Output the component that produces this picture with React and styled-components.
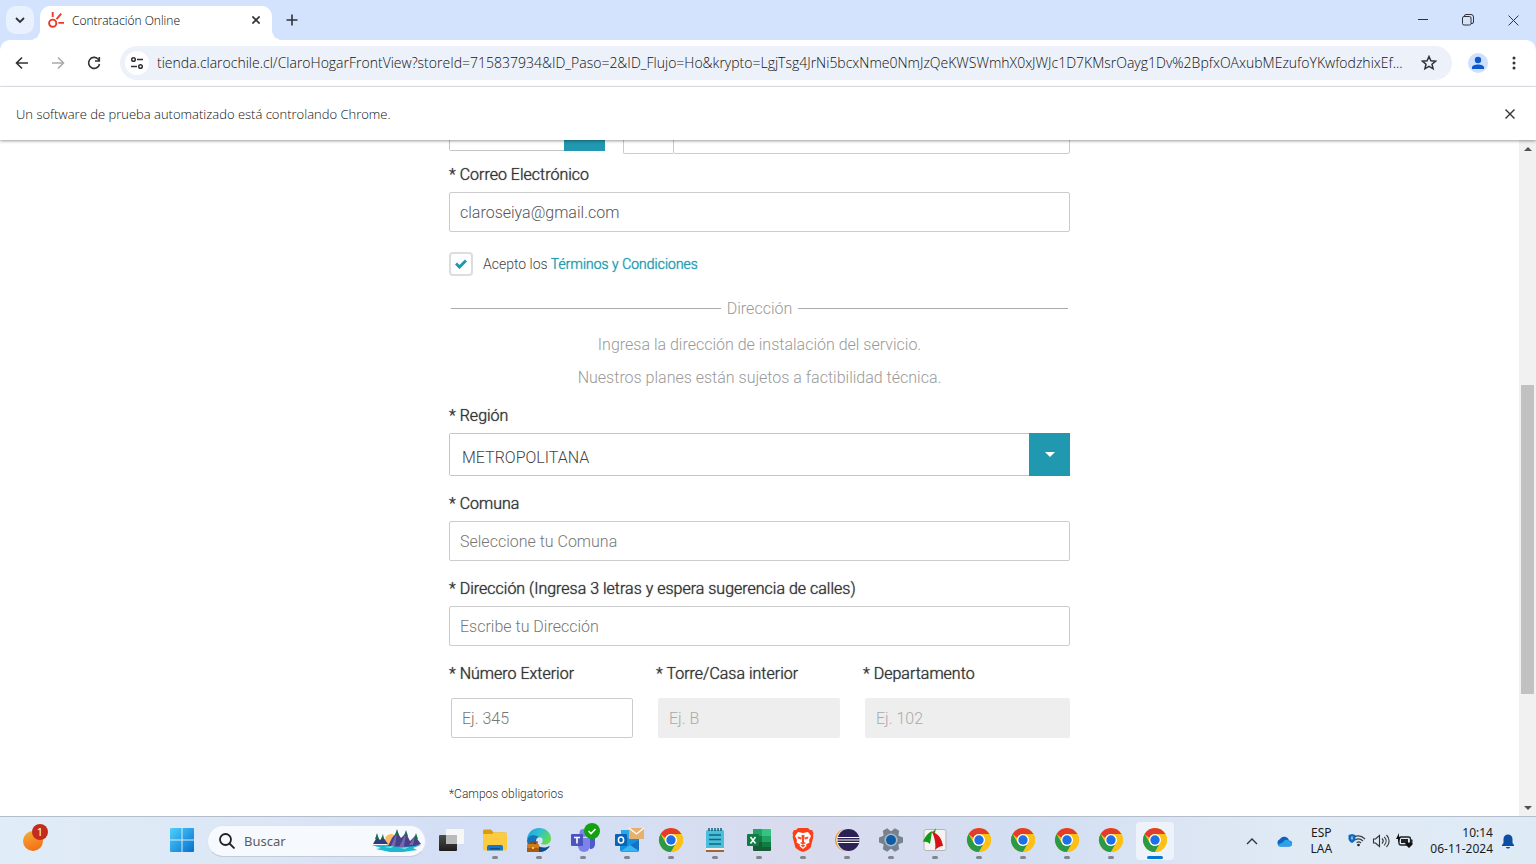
import React from "react";
import styled, { createGlobalStyle } from "styled-components";

const GlobalStyle = createGlobalStyle`
  * { box-sizing: border-box; }
  body { margin: 0; background: #fff; }
  button, input, select { font: inherit; color: inherit; margin: 0; }
  button { border: 0; background: none; padding: 0; cursor: pointer; }
`;

const ui = `"Noto Sans", "Open Sans", sans-serif`;
const chrome = `"Open Sans", "Noto Sans", sans-serif`;
const web = `Roboto, "Liberation Sans", sans-serif`;
const teal = "#2098b0";

const Window = styled.div`
  min-height: 100vh;
  display: flex;
  flex-direction: column;
  font-family: ${ui};
`;

/* ---------- browser frame ---------- */
const TabStrip = styled.header`
  display: flex;
  align-items: flex-end;
  height: 40px;
  background: #d3e3fd;
`;
const TabSearch = styled.button`
  width: 28px;
  height: 28px;
  margin: 0 6px 6px;
  border-radius: 10px;
  background: #e9f1fe;
  display: grid;
  place-items: center;
`;
const Tab = styled.div`
  position: relative;
  display: flex;
  align-items: center;
  gap: 8px;
  width: 232px;
  height: 34px;
  padding: 0 8px 6px;
  border-radius: 10px 10px 0 0;
  background: #fff;
  font-family: ${chrome};
  font-size: 12px;
  font-weight: 300;
  color: #000;
  &::before, &::after {
    content: "";
    position: absolute;
    bottom: 0;
    width: 10px;
    height: 10px;
  }
  &::before {
    left: -10px;
    background: radial-gradient(circle at 0 0, transparent 10px, #fff 10px);
  }
  &::after {
    right: -10px;
    background: radial-gradient(circle at 100% 0, transparent 10px, #fff 10px);
  }
`;
const TabTitle = styled.span`
  flex: 1;
  white-space: nowrap;
`;
const IconButton = styled.button`
  display: grid;
  place-items: center;
  width: ${(p) => p.$w || 36}px;
  height: ${(p) => p.$h || 28}px;
  flex: none;
`;
const WindowControls = styled.div`
  display: flex;
  margin-left: auto;
  align-self: stretch;
`;
const Toolbar = styled.div`
  background: #d3e3fd;
`;
const ToolbarInner = styled.div`
  display: flex;
  align-items: center;
  height: 47px;
  padding: 0 4px;
  background: #fff;
  border-bottom: 1px solid #e6e9ee;
  border-radius: 10px 10px 0 0;
`;
const Omnibox = styled.div`
  flex: 1;
  min-width: 0;
  display: flex;
  align-items: center;
  height: 34px;
  margin: 0 8px;
  padding: 0 5px;
  border-radius: 17px;
  background: #ecf1fa;
`;
const SiteInfo = styled.button`
  width: 24px;
  height: 24px;
  flex: none;
  border-radius: 50%;
  background: #fff;
  display: grid;
  place-items: center;
`;
const Address = styled.input`
  flex: 1;
  min-width: 0;
  margin-left: 8px;
  padding: 0;
  border: 0;
  outline: 0;
  background: none;
  font-family: ${chrome};
  font-size: 14px;
  font-weight: 300;
  line-height: 20px;
  color: #111;
  text-overflow: ellipsis;
`;
const InfoBar = styled.div`
  position: relative;
  z-index: 1;
  display: flex;
  align-items: center;
  justify-content: space-between;
  height: 53px;
  padding: 0 8px 0 16px;
  background: #fff;
  box-shadow: 0 1px 3px rgba(0, 0, 0, 0.4);
  font-family: ${chrome};
  font-size: 13px;
  font-weight: 300;
  color: #111;
`;

/* ---------- page ---------- */
const Viewport = styled.div`
  flex: 1;
  display: flex;
`;
const Main = styled.main`
  flex: 1;
  overflow: hidden;
  font-family: ${web};
  font-size: 16px;
`;
const Form = styled.form`
  max-width: 621px;
  margin: 0 auto;
  padding-bottom: 12px;
`;
const PhoneRow = styled.div`
  display: flex;
  align-items: flex-start;
  gap: 18px;
  margin-top: -31px;
`;
const PhoneBox = styled.div`
  flex: 1;
  display: flex;
  margin-top: 5px;
`;
const Field = styled.div`
  display: flex;
  flex-direction: column;
  gap: 7px;
  margin-top: ${(p) => p.$top || 18}px;
`;
const Label = styled.label`
  line-height: 20px;
  font-weight: 300;
  color: #333;
  text-shadow: 0 0 1px #444;
  white-space: nowrap;
`;
const Input = styled.input`
  width: 100%;
  height: 40px;
  padding: 0 10px;
  border: 1px solid #ccc;
  border-radius: 2px;
  background: #fff;
  font-weight: 300;
  color: #555;
  &::placeholder { color: #777; opacity: 1; }
  &:disabled {
    background: #eee;
    border-color: #eee;
    &::placeholder { color: #aaa; }
  }
`;
const Prefix = styled(Input)`
  width: 50px;
  flex: none;
  border-right: 0;
  border-radius: 2px 0 0 2px;
`;
const SelectBox = styled.div`
  display: grid;
  width: ${(p) => p.$w || "100%"};
  height: ${(p) => p.$h}px;
  border: 1px solid #c4c4c4;
  border-radius: 2px;
  > * { grid-area: 1 / 1; }
`;
const Select = styled.select`
  appearance: none;
  width: 100%;
  padding: 5px 50px 0 12px;
  border: 0;
  background: #fff;
  font-weight: 300;
  color: #444;
`;
const Caret = styled.span`
  justify-self: end;
  width: 41px;
  margin: -1px;
  background: ${teal};
  display: grid;
  place-items: center;
  pointer-events: none;
`;
const Terms = styled.div`
  display: flex;
  align-items: center;
  gap: 10px;
  margin-top: 20px;
  font-size: 14px;
  line-height: 20px;
  font-weight: 300;
  color: #444;
`;
const CheckWrap = styled.span`
  display: grid;
  place-items: center;
  > * { grid-area: 1 / 1; }
  svg { pointer-events: none; }
`;
const Check = styled.input`
  appearance: none;
  width: 24px;
  height: 24px;
  border: 2px solid #ddd;
  border-radius: 4px;
  background: #fff;
`;
const TermsLink = styled.a`
  color: ${teal};
  text-shadow: 0 0 1px ${teal};
  text-decoration: none;
`;
const Divider = styled.h2`
  display: flex;
  align-items: center;
  gap: 6px;
  margin: 22px 2px 9px;
  font-size: 16px;
  line-height: 21px;
  font-weight: 300;
  color: #999;
  &::before, &::after {
    content: "";
    flex: 1;
    border-top: 1px solid #aaa;
  }
`;
const Intro = styled.p`
  margin: 0;
  line-height: 33px;
  font-weight: 300;
  text-align: center;
  color: #999;
`;
const Columns = styled.div`
  display: grid;
  grid-template-columns: repeat(3, minmax(0, 1fr));
  margin-top: 18px;
`;
const Column = styled.div`
  display: flex;
  flex-direction: column;
  gap: 14px;
`;
const ColumnInput = styled.div`
  padding: 0 ${(p) => (p.$last ? 0 : 23)}px 0 2px;
`;
const Note = styled.p`
  margin: 46px 0 0;
  font-size: 12px;
  line-height: 20px;
  font-weight: 300;
  color: #333;
`;
const ScrollBar = styled.div`
  width: 17px;
  display: flex;
  flex-direction: column;
  align-items: center;
  background: #f1f1f1;
`;
const ScrollArrow = styled.span`
  display: grid;
  place-items: center;
  height: 17px;
`;
const Track = styled.div`
  flex: 1;
  width: 13px;
  display: grid;
  grid-template-rows: 228fr 309fr 105fr;
`;
const Thumb = styled.div`
  grid-row: 2;
  background: #c1c1c1;
`;

/* ---------- taskbar ---------- */
const TaskBar = styled.footer`
  display: flex;
  align-items: stretch;
  height: 48px;
  border-top: 1px solid #b5bdca;
  background: linear-gradient(90deg, #e0ecf6 0%, #dde8f6 14%, #d4def5 28%, #d5dff4 40%, #d9dbee 52%, #d3dff3 68%, #dae4f3 76%, #e0eaf5 84%, #deebf5 100%);
  color: #1b1b1b;
`;
const Widgets = styled.button`
  width: 44px;
  margin: 0 105px 0 11px;
  display: grid;
  place-items: center;
`;
const Badge = styled.span`
  grid-area: 1 / 1;
  width: 16px;
  height: 16px;
  margin: -18px 0 0 14px;
  border-radius: 50%;
  background: #c42b1c;
  color: #fff;
  font-size: 11px;
  line-height: 16px;
  text-align: center;
`;
const WidgetDot = styled.span`
  grid-area: 1 / 1;
  width: 20px;
  height: 20px;
  border-radius: 50%;
  background: linear-gradient(160deg, #efb23a, #f58220 60%, #f06a10);
`;
const SearchBox = styled.label`
  display: flex;
  align-items: center;
  gap: 9px;
  width: 219px;
  height: 32px;
  align-self: center;
  margin: 0 3px 0 3px;
  padding: 0 4px 0 11px;
  border-radius: 16px;
  border: 1px solid #dde3ee;
  border-bottom-color: #c3cad8;
  background: #f6f9fe;
`;
const SearchInput = styled.input`
  flex: 1;
  min-width: 0;
  padding: 0;
  border: 0;
  outline: 0;
  background: none;
  font-size: 13px;
  &::placeholder { color: #5c5c5c; opacity: 1; }
`;
const TaskButton = styled.button`
  position: relative;
  width: 44px;
  flex: none;
  display: grid;
  place-items: center;
  border-radius: 4px;
  &::before {
    content: "";
    grid-area: 1 / 1;
    width: 38px;
    height: 38px;
    border-radius: 4px;
    background: ${(p) => (p.$active ? "#eef2fb" : "transparent")};
  }
  &::after {
    content: "";
    position: absolute;
    bottom: 5px;
    left: ${(p) => (p.$active ? 14 : 19)}px;
    right: ${(p) => (p.$active ? 14 : 19)}px;
    height: 3px;
    border-radius: 2px;
    background: ${(p) => (p.$active ? "#0078d4" : p.$open ? "#81858f" : "transparent")};
  }
  > svg { grid-area: 1 / 1; overflow: visible; margin-bottom: 2px; }
`;
const Tray = styled.div`
  display: flex;
  align-items: center;
  margin-left: auto;
  padding-right: 22px;
  font-size: 12px;
  line-height: 16px;
`;
const Lang = styled.button`
  width: 42px;
  line-height: 16px;
  text-align: center;
`;
const Status = styled.button`
  display: flex;
  align-items: center;
  gap: 6px;
  margin: 0 16px 0 6px;
`;
const Clock = styled.button`
  margin-right: 9px;
  text-align: right;
  line-height: 16px;
`;

/* ---------- drawings ---------- */
const Stroke = ({ s = 16, w = 1.6, c = "#303236", children, box = 16 }) => (
  <svg width={s} height={s} viewBox={`0 0 ${box} ${box}`} fill="none" stroke={c} strokeWidth={w} aria-hidden="true">
    {children}
  </svg>
);
const Cross = ({ s = 10, w = 1.4 }) => (
  <Stroke s={s} w={w} box={10}><path d="M.5 .5l9 9M9.500 .5l-9 9" /></Stroke>
);
const Triangle = ({ up, w = 8, h = 4, c = "#505050" }) => (
  <svg width={w} height={h} viewBox="0 0 8 4" fill={c} aria-hidden="true"><path d={up ? "M0 4L4 0l4 4z" : "M0 0h8L4 4z"} /></svg>
);
const Pic = ({ children, w = 24, h = 24 }) => (
  <svg width={w} height={h} viewBox={`0 0 ${w} ${h}`} aria-hidden="true">{children}</svg>
);

const ClaroLogo = () => (
  <svg width="16" height="16" viewBox="0 0 16 16" fill="none" stroke="#ef3829" strokeWidth="1.9" aria-hidden="true">
    <circle cx="4.700" cy="11.200" r="3.600" /><path d="M4.700 0v5M8.600 7.200l4.600-5.500M10.400 10.900H16" />
  </svg>
);
const ChromeLogo = () => (
  <Pic>
    <circle cx="12" cy="12" r="12" fill="#fbc116" />
    <path d="M1.600 6A12 12 0 0 1 22.400 6H12a6 6 0 0 0-5.600 4z" fill="#e33b2e" />
    <path d="M1.600 6A12 12 0 0 0 12 24l5.200-9L12 18a6 6 0 0 1-5.200-3z" fill="#2a9a48" />
    <path d="M12 6h10.400A12 12 0 0 1 12 24l5.200-9A6 6 0 0 0 12 6z" fill="#fbc116" />
    <circle cx="12" cy="12" r="6" fill="#fff" /><circle cx="12" cy="12" r="4.700" fill="#1f6fe8" />
  </Pic>
);
const WindowsLogo = () => (
  <Pic>
    <defs><linearGradient id="win" x1="0" y1="0" x2="1" y2="1"><stop offset="0" stopColor="#4fd0fb" /><stop offset="1" stopColor="#0470cf" /></linearGradient></defs>
    <path fill="url(#win)" d="M0 1a1 1 0 0 1 1-1h10.500v11.500H0zM12.500 0H23a1 1 0 0 1 1 1v10.500H12.500zM0 12.500h11.500V24H1a1 1 0 0 1-1-1zM12.500 12.500H24V23a1 1 0 0 1-1 1H12.500z" />
  </Pic>
);
const TaskViewLogo = () => (
  <Pic>
    <defs>
      <linearGradient id="tv" x1="0" y1="0" x2="0" y2="1"><stop offset="0" stopColor="#4d4d4d" /><stop offset="1" stopColor="#1d1d1d" /></linearGradient>
    </defs>
    <rect x="0" y="7" width="18" height="16" rx="1" fill="url(#tv)" />
    <rect x="7" y="1" width="18" height="15" rx="1" fill="#f7f7f7" /><path d="M7 7h11v9H7z" fill="#b9babc" />
  </Pic>
);
const FolderLogo = () => (
  <Pic>
    <path d="M0 3a1.500 1.500 0 0 1 1.500-1.500h6.500l2.500 3H22.500A1.500 1.500 0 0 1 24 6v4H0z" fill="#dd9b0f" />
    <path d="M0 6h9l2-1.500H22.500A1.500 1.500 0 0 1 24 6v15a1.500 1.500 0 0 1-1.500 1.500H1.500A1.500 1.500 0 0 1 0 21z" fill="#fccb3f" />
    <path d="M4 22.500V19a2 2 0 0 1 2-2h12a2 2 0 0 1 2 2v3.500z" fill="#1378cf" /><path d="M7 20h10v1.500H7z" fill="#0a4f95" />
  </Pic>
);
const EdgeLogo = () => (
  <Pic>
    <defs>
      <linearGradient id="e1" x1="0" y1="0" x2="1" y2=".5"><stop offset="0" stopColor="#2199df" /><stop offset=".5" stopColor="#2cc0d0" /><stop offset="1" stopColor="#62d957" /></linearGradient>
    </defs>
    <path d="M0 12C0 5 5.500 0 12 0c7 0 12 5 12 10.500 0 4-3 6-6.500 6-3 0-4.500-1-3.500-3 .8-1.500-.5-5-5-5-5 0-9 1.500-9 3.500z" fill="url(#e1)" />
    <path d="M0 12c1-4 4.500-5.500 8.500-4.500 3 .5 5.500 2.500 5.500 5 0-2-4-2-5 0-1.500 4 0 7 4 8 3.500 1 7 0 10-3-2 4-6 6.500-11 6.500C5 24 0 19 0 12z" fill="#1572bd" />
    <path d="M8.500 11.500C8 16 12 20 18 19.500c2 0 4-1.500 4.500-1.500C20 23 15 24.500 11 23.500 6 21 6.500 14 8.500 11.500z" fill="#0d4b91" />
    <circle cx="12.500" cy="12.500" r="3.200" fill="#d6e2f6" />
    <path d="M4 16v-2h6v2" stroke="#8b4b0e" strokeWidth="1.400" fill="none" /><rect x="0" y="16" width="12" height="8" rx="1" fill="#cf7a1b" /><path d="M0 20h12v4H0z" fill="#a85a10" /><path d="M5 19h2v2H5z" fill="#f4c467" />
  </Pic>
);
const TeamsLogo = () => (
  <Pic>
    <circle cx="20" cy="8" r="3" fill="#5059c9" /><circle cx="12.500" cy="5" r="4" fill="#7b83eb" />
    <path d="M16 10h8v6c0 3-2 5-5 5z" fill="#5059c9" /><path d="M7 10h12v8a6 6 0 0 1-12 0z" fill="#7b83eb" />
    <rect x="0" y="6" width="12" height="12" rx="1" fill="#4b53bc" />
    <path d="M3 9.500h6M6 9.500V15.500" stroke="#fff" strokeWidth="1.600" />
    <circle cx="21" cy="3" r="8" fill="#13a10e" /><path d="M17.500 3l2.500 2.500 4.500-4.500" stroke="#fff" strokeWidth="1.600" fill="none" />
  </Pic>
);
const OutlookLogo = () => (
  <Pic>
    <path d="M6 2h12v9H6z" fill="#28a8ea" /><path d="M5 10h19v12a1.500 1.500 0 0 1-1.500 1.500h-16A1.500 1.500 0 0 1 5 22z" fill="#1490df" />
    <path d="M6 23l18-11v10a1.500 1.500 0 0 1-1.500 1.500h-16z" fill="#1a6fc0" /><path d="M6 23l9-6 9 6z" fill="#35b8f1" />
    <rect x="0" y="6" width="12" height="12" rx="1" fill="#0a64b4" /><ellipse cx="6" cy="12" rx="2.600" ry="3" fill="none" stroke="#fff" strokeWidth="1.500" />
    <path d="M14 0h15v11H14z" fill="#e8b06d" /><path d="M14 0l7.500 6L29 0" fill="none" stroke="#fff" strokeWidth="1.300" />
  </Pic>
);
const NotepadLogo = () => (
  <Pic>
    <rect x="3" y="2" width="18" height="20" rx="1.500" fill="#49bfdb" /><path d="M3 20h18v3H3z" fill="#f4efe9" /><path d="M3 22h18v2H3z" fill="#a5623a" />
    <path d="M6 7h12M6 11.500h12M6 16h12" stroke="#11667b" strokeWidth="1.500" /><path d="M6 0v3M9 0v3M12 0v3M15 0v3M18 0v3" stroke="#155f74" strokeWidth="1.500" />
  </Pic>
);
const ExcelLogo = () => (
  <Pic>
    <path d="M6 1h9v7H6z" fill="#21a366" /><path d="M15 1h8a1 1 0 0 1 1 1v6h-9z" fill="#33c481" /><path d="M6 8h9v6H6z" fill="#107c41" /><path d="M15 8h9v6h-9z" fill="#21a366" /><path d="M6 14h18v8a1 1 0 0 1-1 1H7a1 1 0 0 1-1-1z" fill="#185c37" /><path d="M15 14h9v5h-9z" fill="#107c41" />
    <rect y="6" width="12" height="12" rx="1" fill="#107c41" /><path d="M3.500 9l5 6.500M8.500 9l-5 6.500" stroke="#fff" strokeWidth="1.600" />
  </Pic>
);
const BraveLogo = () => (
  <Pic>
    <path d="M7 0h10l2 2h2l1.500 3-.5 2 .3 2-2.500 10c-.5 1.500-2 2-4 3.500L12 24l-3.800-1.500c-2-1.500-3.500-2-4-3.500L1.700 9 2 7l-.5-2L3 2h2z" fill="#fb3f16" />
    <path d="M7 4l5 1 5-1 3 4-2 4 .5 2.500-3.500 2 .5 1.500-3.500 3-3.500-3 .500-1.500-3.500-2L6 12 4 8z" fill="#fff" />
    <path d="M6.500 8.500l4 1-.500 2-3-1zM17.500 8.500l-4 1 .5 2 3-1zM10.500 7h3l-.5 7 2 1-3 1.500-3-1.500 2-1zM9.500 17.500l2.500-1 2.500 1-2.500 1.700z" fill="#fb4a1e" />
  </Pic>
);
const EclipseLogo = () => (
  <Pic>
    <circle cx="11" cy="12" r="11" fill="#f7941e" /><circle cx="12.500" cy="12" r="11.200" fill="#dde1ef" />
    <circle cx="13.500" cy="12" r="11" fill="#2c2255" /><path d="M2.500 9.500h22M1.500 12h23.500M2.500 14.500h22" stroke="#fff" strokeWidth="1.200" />
  </Pic>
);
const GearLogo = () => (
  <Pic>
    <g fill="#76828e">
      <circle cx="12" cy="12" r="9" />
      {[30, 90, 150].map((a) => (
        <path key={a} d="M9.500 0h5l1.500 4v16l-1.500 4h-5L8 20V4z" transform={`rotate(${a} 12 12)`} />
      ))}
    </g>
    <circle cx="12" cy="12" r="6.500" fill="#aebac6" /><circle cx="12" cy="12" r="5" fill="#0e5ca6" />
  </Pic>
);
const CaptureLogo = () => (
  <Pic>
    <rect x="1" y="1.500" width="22" height="21" rx="2" fill="#f3f3f3" stroke="#b5b5b5" />
    <path d="M0 14C2 8 6 4 9 3.500L7 16c-2-2-4-2.500-7-2z" fill="#139a17" /><path d="M6 4c4 0 5-1 7-4l-1 5z" fill="#1ba01b" />
    <path d="M9 4c6 1 10 7 11 14-3 0-6 2-8 4 1-5 0-12-3-18z" fill="#d61212" />
  </Pic>
);
const Landscape = () => (
  <Pic w={49} h={24}>
    <path d="M0 16h49l-8 3 4 2-14 2H18L4 20l5-1z" fill="#1bb8cf" /><circle cx="19" cy="11" r="6" fill="#f9bd68" />
    <path d="M1 15l4-7 3 3 3-3 5 7z" fill="#343b7b" /><path d="M16 17l4-8 5-6 4 6 5-5 4 8 5-5 6 8-6 2-12 1z" fill="#493f8b" /><path d="M25 3l-2 14h-4zM34 4l-2 14h-5zM43 7l-2 9h-4z" fill="#7667aa" />
    <path d="M25 0l2 6h-4zM34 1l2 6h-4zM5 4l2 6H3zM44 4l2 6h-4zM11 5l1 5h-3z" fill="#1f6a4c" />
    <path d="M12 18l10-1-3 2zM28 19l9-1-4 2z" fill="#8be5e8" />
  </Pic>
);

const apps = [
  ["Vista de tareas", TaskViewLogo, false],
  ["Explorador de archivos", FolderLogo, true],
  ["Microsoft Edge", EdgeLogo, true],
  ["Microsoft Teams", TeamsLogo, true],
  ["Outlook", OutlookLogo, true],
  ["Google Chrome", ChromeLogo, true],
  ["Bloc de notas", NotepadLogo, true],
  ["Excel", ExcelLogo, true],
  ["Brave", BraveLogo, true],
  ["Eclipse", EclipseLogo, true],
  ["Configuración", GearLogo, true],
  ["FastStone Capture", CaptureLogo, true],
  ["Chrome 2", ChromeLogo, true],
  ["Chrome 3", ChromeLogo, true],
  ["Chrome 4", ChromeLogo, true],
  ["Chrome 5", ChromeLogo, true],
];

const url =
  "tienda.clarochile.cl/ClaroHogarFrontView?storeId=715837934&ID_Paso=2&ID_Flujo=Ho&krypto=LgjTsg4JrNi5bcxNme0NmJzQeKWSWmhX0xJWJc1D7KMsrOayg1Dv%2BpfxOAxubMEzufoYKwfodzhixEf...";

function BrowserFrame() {
  return (
    <>
      <TabStrip>
        <TabSearch aria-label="Buscar pestañas"><Stroke s={10} w={1.8} box={10}><path d="M1 3l4 4 4-4" /></Stroke></TabSearch>
        <Tab>
          <ClaroLogo />
          <TabTitle>Contratación Online</TabTitle>
          <IconButton $w={16} $h={16} aria-label="Cerrar pestaña"><Cross s={8} w={2} /></IconButton>
        </Tab>
        <IconButton $w={40} $h={40} aria-label="Nueva pestaña"><Stroke s={12} w={1.6} box={12}><path d="M6 0.500v11M0.500 6h11" /></Stroke></IconButton>
        <WindowControls>
          <IconButton $w={45} $h={40} aria-label="Minimizar"><Stroke s={10} w={1} box={10}><path d="M0 4.500h10" /></Stroke></IconButton>
          <IconButton $w={45} $h={40} aria-label="Restaurar"><Stroke s={12} w={1} box={12}><rect x="0.500" y="2.500" width="8.500" height="8.500" rx="1.500" /><path d="M2.500 2.500v-.5A1.500 1.500 0 0 1 4 .5h5A2.500 2.500 0 0 1 11.500 3v5A1.500 1.500 0 0 1 10 9.500H9" /></Stroke></IconButton>
          <IconButton $w={46} $h={40} aria-label="Cerrar"><Cross s={11} w={0.9} /></IconButton>
        </WindowControls>
      </TabStrip>
      <Toolbar>
        <ToolbarInner>
          <IconButton aria-label="Atrás"><Stroke><path d="M14 8H3M8 2.500L2.500 8 8 13.500" /></Stroke></IconButton>
          <IconButton aria-label="Adelante"><Stroke c="#a9abae"><path d="M2 8h11M8 2.500L13.500 8 8 13.500" /></Stroke></IconButton>
          <IconButton aria-label="Recargar"><Stroke><path d="M13.500 9A5.500 5.500 0 1 1 12 4l1.300 1.500" /><path d="M13.300 2v4H9" /></Stroke></IconButton>
          <Omnibox>
            <SiteInfo aria-label="Información del sitio"><Stroke s={14} w={1.5} box={14}><circle cx="3.500" cy="3.500" r="1.800" /><path d="M7 3.500h6M1 10.500h6" /><circle cx="10.500" cy="10.500" r="1.800" /></Stroke></SiteInfo>
            <Address type="text" aria-label="Dirección web" defaultValue={url} />
            <IconButton $w={36} aria-label="Añadir a marcadores"><Stroke w={1.5}><path d="M8 1.500l1.900 4.300 4.700.4-3.600 3 1.100 4.600L8 11.400l-4.100 2.400L5 9.200l-3.600-3 4.700-.4z" /></Stroke></IconButton>
          </Omnibox>
          <IconButton aria-label="Perfil"><Pic w={20} h={20}><circle cx="10" cy="10" r="10" fill="#cfe0fc" /><circle cx="10" cy="7" r="3.200" fill="#0b57d0" /><path d="M4 16v-1.500c0-2 3-3 6-3s6 1 6 3V16z" fill="#0b57d0" /></Pic></IconButton>
          <IconButton aria-label="Menú"><Pic w={4} h={16}><g fill="#303236"><circle cx="2" cy="3" r="1.500" /><circle cx="2" cy="8" r="1.500" /><circle cx="2" cy="13" r="1.500" /></g></Pic></IconButton>
        </ToolbarInner>
      </Toolbar>
      <InfoBar>
        <span>Un software de prueba automatizado está controlando Chrome.</span>
        <IconButton aria-label="Cerrar aviso"><Cross /></IconButton>
      </InfoBar>
    </>
  );
}

function AddressForm() {
  return (
    <Form onSubmit={(e) => e.preventDefault()}>
      <PhoneRow>
        <SelectBox $w="156px" $h={42}>
          <Select aria-label="Tipo de teléfono"><option></option></Select>
          <Caret />
        </SelectBox>
        <PhoneBox>
          <Prefix aria-label="Prefijo" />
          <Input aria-label="Teléfono" />
        </PhoneBox>
      </PhoneRow>
      <Field $top={11}>
        <Label htmlFor="correo">* Correo Electrónico</Label>
        <Input id="correo" type="email" defaultValue="claroseiya@gmail.com" />
      </Field>
      <Terms>
        <CheckWrap>
          <Check id="terminos" type="checkbox" defaultChecked />
          <svg width="12" height="10" viewBox="0 0 12 10" fill="none" stroke={teal} strokeWidth="3"><path d="M1 4.500L4.500 8 11 1.500" /></svg>
        </CheckWrap>
        <span><label htmlFor="terminos">Acepto los </label><TermsLink href="#terminos">Términos y Condiciones</TermsLink></span>
      </Terms>
      <Divider>Dirección</Divider>
      <Intro>Ingresa la dirección de instalación del servicio.</Intro>
      <Intro>Nuestros planes están sujetos a factibilidad técnica.</Intro>
      <Field $top={12}>
        <Label htmlFor="region">* Región</Label>
        <SelectBox $h={43}>
          <Select id="region"><option>METROPOLITANA</option></Select>
          <Caret><Triangle w={10} h={5} c="#fff" /></Caret>
        </SelectBox>
      </Field>
      <Field>
        <Label htmlFor="comuna">* Comuna</Label>
        <Input id="comuna" placeholder="Seleccione tu Comuna" />
      </Field>
      <Field>
        <Label htmlFor="direccion">* Dirección (Ingresa 3 letras y espera sugerencia de calles)</Label>
        <Input id="direccion" placeholder="Escribe tu Dirección" />
      </Field>
      <Columns>
        <Column>
          <Label htmlFor="numero">* Número Exterior</Label>
          <ColumnInput><Input id="numero" placeholder="Ej. 345" /></ColumnInput>
        </Column>
        <Column>
          <Label htmlFor="torre">* Torre/Casa interior</Label>
          <ColumnInput><Input id="torre" placeholder="Ej. B" disabled /></ColumnInput>
        </Column>
        <Column>
          <Label htmlFor="depto">* Departamento</Label>
          <ColumnInput $last><Input id="depto" placeholder="Ej. 102" disabled /></ColumnInput>
        </Column>
      </Columns>
      <Note>*Campos obligatorios</Note>
    </Form>
  );
}

function DesktopBar() {
  return (
    <TaskBar>
      <Widgets aria-label="Widgets"><WidgetDot /><Badge>1</Badge></Widgets>
      <TaskButton aria-label="Inicio"><WindowsLogo /></TaskButton>
      <SearchBox>
        <Stroke w={1.8} c="#222"><circle cx="6.500" cy="6.500" r="5.500" /><path d="M10.500 10.500l5 5" /></Stroke>
        <SearchInput type="search" aria-label="Buscar" placeholder="Buscar" />
        <Landscape />
      </SearchBox>
      {apps.map(([name, Logo, open]) => (
        <TaskButton key={name} aria-label={name} $open={open}><Logo /></TaskButton>
      ))}
      <TaskButton aria-label="Contratación Online" $active><ChromeLogo /></TaskButton>
      <Tray>
        <IconButton $w={32} aria-label="Iconos ocultos"><Stroke s={12} w={1.4} box={12}><path d="M1 9l5-5 5 5" /></Stroke></IconButton>
        <IconButton $w={32} aria-label="OneDrive"><Pic w={16} h={12}><path d="M4 11.500a4 4 0 0 1 0-7.500 5 5 0 0 1 9 1.500 3 3 0 0 1 0 6z" fill="#0c62bd" /><path d="M2 11c0-2 2-3 4-3l3-3c3-1 7 2 7 4a2.500 2.500 0 0 1-2.500 2.500h-10z" fill="#2aa2ec" /></Pic></IconButton>
        <Lang aria-label="Idioma">ESP<br />LAA</Lang>
        <Status aria-label="Red, volumen y batería">
          <Pic w={18} h={16}>
            <g fill="none" stroke="#3c3f45" strokeWidth="1.200"><path d="M6 4c4-2 8-1 11 2M7 7c3-2 6-1 8 1M8.500 9.500c2-1 3.500-.5 4.500.5" /></g><circle cx="10.500" cy="12" r="1.300" fill="#222" />
            <path d="M4 1l3.500 1v3.500C7.500 8 6 9 4 10 2 9 .5 8 .5 5.500V2z" fill="#0f6cbd" /><path d="M4 3.500v3" stroke="#fff" />
          </Pic>
          <Pic w={18} h={16}><g fill="none" stroke="#333" strokeWidth="1.100"><path d="M1.500 6h2L7.500 2.500v11L3.500 10h-2z" /><path d="M10 5.500c1.500 1.500 1.500 3.500 0 5M12.200 3.800c2.500 2.500 2.500 6 0 8.500M14.500 2c3.500 3.500 3.500 8.500 0 12" /></g></Pic>
          <Pic w={18} h={16}><rect x="3" y="4" width="11.500" height="8" rx="2" fill="none" stroke="#222" strokeWidth="1.300" /><path d="M5 6h7v4H5zM15 6.500h1.500v3H15z" fill="#222" /><path d="M3 0L0 6h2v4l3-6H3zM13 15l-3.500-3.500c-1-2 2-3.500 3.500-1.500 1.500-2 4.500-.5 3.500 1.500z" fill="#111" /></Pic>
        </Status>
        <Clock aria-label="Fecha y hora">10:14<br />06-11-2024</Clock>
        <Pic w={12} h={16}><path d="M0 12l1.500-2V6a4.500 4.500 0 0 1 9 0v4l1.500 2v1H0zM4 14h4c0 2-4 2-4 0z" fill="#0b4ea2" /></Pic>
      </Tray>
    </TaskBar>
  );
}

export default function App() {
  return (
    <Window>
      <GlobalStyle />
      <BrowserFrame />
      <Viewport>
        <Main><AddressForm /></Main>
        <ScrollBar aria-hidden="true">
          <ScrollArrow><Triangle up /></ScrollArrow>
          <Track><Thumb /></Track>
          <ScrollArrow><Triangle /></ScrollArrow>
        </ScrollBar>
      </Viewport>
      <DesktopBar />
    </Window>
  );
}
